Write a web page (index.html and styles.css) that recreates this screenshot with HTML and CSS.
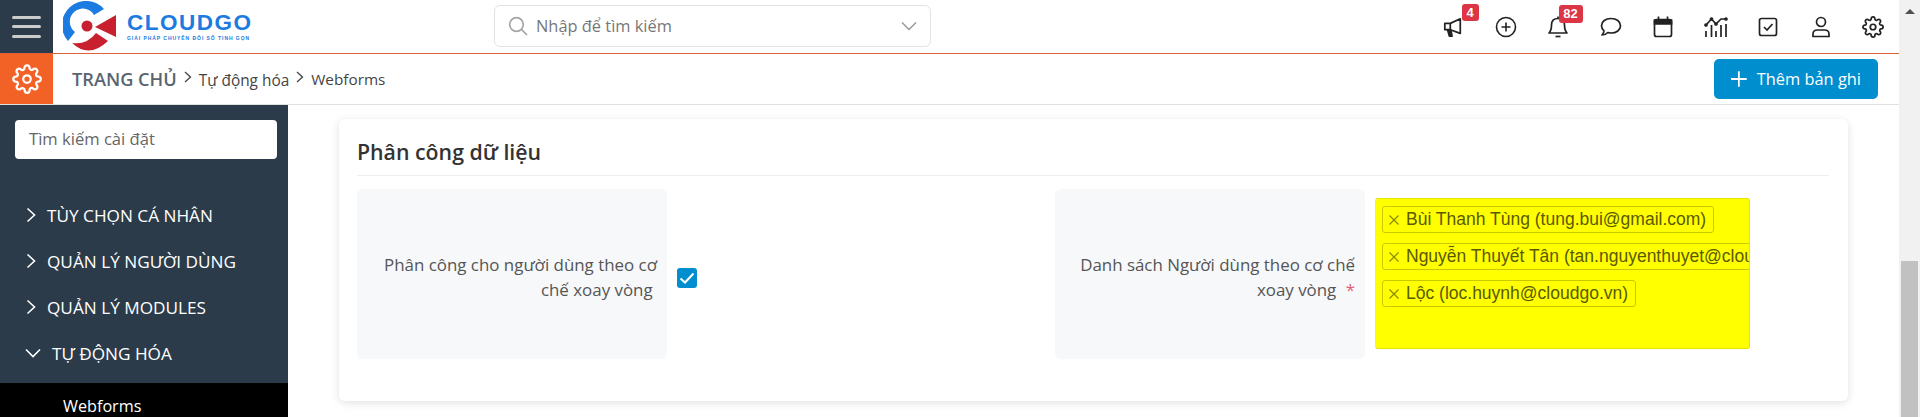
FILE: index.html
```html
<!DOCTYPE html>
<html lang="en">
  <head>
    <meta charset="UTF-8" />
    <title>Webforms</title>
    <link rel="stylesheet" href="styles.css">
  </head>
  <body>
    <div class="page">
      <div class="main">
        <header class="topbar">
          <button class="menu-btn">
            <span></span><span></span><span></span>
          </button>
          <div class="logo">
            <svg class="logo-mark" width="54" height="51" viewBox="0 0 54 51">
              <path d="M41 8 A24 24 0 1 0 5 40 L12 31 A13 13 0 1 1 31 14 Z" fill="#1c7be0" />
              <path d="M9 42 Q26 58 45 40 L33 32 Q24 44 9 42 Z" fill="#c9202f" />
              <path d="M32 26 L53 14 V36 Z" fill="#c9202f" />
              <circle cx="24" cy="25" r="5.5" fill="#c9202f" />
            </svg>
            <div class="logo-text">
              <div class="logo-name">CLOUDGO</div>
              <div class="logo-slogan">GIẢI PHÁP CHUYỂN ĐỔI SỐ TINH GỌN</div>
            </div>
          </div>
          <div class="search-wrap">
            <div class="search-box">
              <svg width="20" height="20" viewBox="0 0 20 20" fill="none" stroke="#a5a5a5" stroke-width="1.7">
                <circle cx="8.5" cy="8.5" r="6.8" />
                <path d="M13.5 13.5 L19 19" />
              </svg>
              <span class="search-text">Nhập để tìm kiếm</span>
              <svg class="search-caret" width="16" height="10" viewBox="0 0 16 10" fill="none" stroke="#9a9a9a" stroke-width="1.5">
                <path d="M1 1.5 L8 8.5 L15 1.5" />
              </svg>
            </div>
          </div>
          <nav class="top-icons">
            <a class="top-icon">
              <svg width="20" height="20" viewBox="0 0 22 22" fill="none" stroke="#222" stroke-width="1.9" stroke-linejoin="round">
                <path d="M2 7 H8 L19 2 V18 L8 14 H2 Z" />
                <path d="M5 14 L7 21 H10 L8.5 14" fill="#222" />
                <path d="M8 7 V14" />
              </svg>
              <span class="badge">4</span>
            </a>
            <a class="top-icon">
              <svg width="22" height="22" viewBox="0 0 22 22" fill="none" stroke="#222" stroke-width="1.6">
                <circle cx="11" cy="11" r="9.5" />
                <path d="M11 6.5 V15.5 M6.5 11 H15.5" />
              </svg>
            </a>
            <a class="top-icon">
              <svg width="22" height="24" viewBox="0 0 22 24" fill="none" stroke="#222" stroke-width="1.7" stroke-linejoin="round">
                <path d="M2 18 C4 16 4.5 14 4.5 10 C4.5 6 7 3.5 11 3.5 C15 3.5 17.5 6 17.5 10 C17.5 14 18 16 20 18 Z" />
                <path d="M8.5 21.5 H13.5" />
                <path d="M11 1.5 V3.5" />
              </svg>
              <span class="badge badge-wide">82</span>
            </a>
            <a class="top-icon">
              <svg width="22" height="22" viewBox="0 0 22 22" fill="none" stroke="#222" stroke-width="1.7" stroke-linejoin="round">
                <path d="M11 2.5 C16.5 2.5 20.5 5.5 20.5 9.8 C20.5 14 16.5 17 11 17 C9.8 17 8.8 16.8 7.8 16.5 C6.5 18 4.5 19 2 19 C3.2 17.8 4 16.5 4 14.8 C2.5 13.5 1.5 11.8 1.5 9.8 C1.5 5.5 5.5 2.5 11 2.5 Z" />
              </svg>
            </a>
            <a class="top-icon">
              <svg width="20" height="22" viewBox="0 0 20 22" fill="none" stroke="#222" stroke-width="1.7">
                <rect x="1.5" y="3.5" width="17" height="17" rx="2" />
                <path d="M1.5 4 H18.5 V8 H1.5 Z" fill="#222" />
                <path d="M5.5 0.5 V3 M14.5 0.5 V3" />
              </svg>
            </a>
            <a class="top-icon">
              <svg width="24" height="22" viewBox="0 0 24 22" fill="#222" stroke="#222" stroke-width="1.7">
                <path d="M2 9 L7.5 3 L12 8 L17 3 L22 3" fill="none" />
                <circle cx="2" cy="9" r="1" />
                <circle cx="7.5" cy="3" r="1" />
                <circle cx="12" cy="8" r="1" />
                <circle cx="22" cy="3" r="1" />
                <path d="M2 15 V21 M7.5 9 V21 M12 15 V21 M17 9 V21 M22 8 V21" fill="none" />
              </svg>
            </a>
            <a class="top-icon">
              <svg width="20" height="20" viewBox="0 0 20 20" fill="none" stroke="#222" stroke-width="1.7">
                <rect x="1.5" y="1.5" width="17" height="17" rx="2" />
                <path d="M6 10 L9 13 L14.5 7" />
              </svg>
            </a>
            <a class="top-icon">
              <svg width="20" height="22" viewBox="0 0 20 22" fill="none" stroke="#222" stroke-width="1.7">
                <circle cx="10" cy="6" r="4.5" />
                <path d="M2 20.5 V18 C2 15.5 4 14 6.5 14 H13.5 C16 14 18 15.5 18 18 V20.5 Z" />
              </svg>
            </a>
            <a class="top-icon">
              <svg width="22" height="22" viewBox="0 0 24 24" fill="none" stroke="#222" stroke-width="1.9">
                <circle cx="12" cy="12" r="3" />
                <path d="M19.4 15a1.65 1.65 0 0 0 .33 1.82l.06.06a2 2 0 0 1 0 2.83 2 2 0 0 1-2.83 0l-.06-.06a1.65 1.65 0 0 0-1.82-.33 1.65 1.65 0 0 0-1 1.51V21a2 2 0 0 1-2 2 2 2 0 0 1-2-2v-.09A1.65 1.65 0 0 0 9 19.4a1.65 1.65 0 0 0-1.82.33l-.06.06a2 2 0 0 1-2.83 0 2 2 0 0 1 0-2.83l.06-.06a1.65 1.65 0 0 0 .33-1.82 1.65 1.65 0 0 0-1.51-1H3a2 2 0 0 1-2-2 2 2 0 0 1 2-2h.09A1.65 1.65 0 0 0 4.6 9a1.65 1.65 0 0 0-.33-1.82l-.06-.06a2 2 0 0 1 0-2.83 2 2 0 0 1 2.83 0l.06.06a1.65 1.65 0 0 0 1.82.33H9a1.65 1.65 0 0 0 1-1.51V3a2 2 0 0 1 2-2 2 2 0 0 1 2 2v.09a1.65 1.65 0 0 0 1 1.51 1.65 1.65 0 0 0 1.82-.33l.06-.06a2 2 0 0 1 2.83 0 2 2 0 0 1 0 2.83l-.06.06a1.65 1.65 0 0 0-.33 1.82V9a1.65 1.65 0 0 0 1.51 1H21a2 2 0 0 1 2 2 2 2 0 0 1-2 2h-.09a1.65 1.65 0 0 0-1.51 1z" />
              </svg>
            </a>
          </nav>
        </header>

        <div class="crumbbar">
          <div class="settings-tile">
            <svg width="30" height="30" viewBox="0 0 24 24" fill="none" stroke="#fff" stroke-width="1.8">
              <circle cx="12" cy="12" r="3" />
              <path d="M19.4 15a1.65 1.65 0 0 0 .33 1.82l.06.06a2 2 0 0 1 0 2.83 2 2 0 0 1-2.83 0l-.06-.06a1.65 1.65 0 0 0-1.82-.33 1.65 1.65 0 0 0-1 1.51V21a2 2 0 0 1-2 2 2 2 0 0 1-2-2v-.09A1.65 1.65 0 0 0 9 19.4a1.65 1.65 0 0 0-1.82.33l-.06.06a2 2 0 0 1-2.83 0 2 2 0 0 1 0-2.83l.06-.06a1.65 1.65 0 0 0 .33-1.82 1.65 1.65 0 0 0-1.51-1H3a2 2 0 0 1-2-2 2 2 0 0 1 2-2h.09A1.65 1.65 0 0 0 4.6 9a1.65 1.65 0 0 0-.33-1.82l-.06-.06a2 2 0 0 1 0-2.83 2 2 0 0 1 2.83 0l.06.06a1.65 1.65 0 0 0 1.82.33H9a1.65 1.65 0 0 0 1-1.51V3a2 2 0 0 1 2-2 2 2 0 0 1 2 2v.09a1.65 1.65 0 0 0 1 1.51 1.65 1.65 0 0 0 1.82-.33l.06-.06a2 2 0 0 1 2.83 0 2 2 0 0 1 0 2.83l-.06.06a1.65 1.65 0 0 0-.33 1.82V9a1.65 1.65 0 0 0 1.51 1H21a2 2 0 0 1 2 2 2 2 0 0 1-2 2h-.09a1.65 1.65 0 0 0-1.51 1z" />
            </svg>
          </div>
          <div class="crumbs">
            <span class="crumb-home">TRANG CHỦ</span>
            <svg class="crumb-sep" width="8" height="12" viewBox="0 0 8 12" fill="none" stroke="#444" stroke-width="1.3"><path d="M1 1 L6.5 6 L1 11" /></svg>
            <span class="crumb-link">Tự động hóa</span>
            <svg class="crumb-sep" width="8" height="12" viewBox="0 0 8 12" fill="none" stroke="#444" stroke-width="1.3"><path d="M1 1 L6.5 6 L1 11" /></svg>
            <span class="crumb-current">Webforms</span>
          </div>
          <button class="add-btn">
            <svg width="16" height="16" viewBox="0 0 16 16" fill="none" stroke="#fff" stroke-width="1.8"><path d="M8 0 V16 M0 8 H16" /></svg>
            Thêm bản ghi
          </button>
        </div>

        <div class="body-row">
          <aside class="sidebar">
            <div class="side-search">
              <div class="side-input">Tìm kiếm cài đặt</div>
            </div>
            <ul class="side-menu">
              <li class="side-item">
                <svg width="10" height="16" viewBox="0 0 10 16" fill="none" stroke="#fff" stroke-width="1.6"><path d="M1.5 1.5 L8.5 8 L1.5 14.5" /></svg>
                TÙY CHỌN CÁ NHÂN
              </li>
              <li class="side-item">
                <svg width="10" height="16" viewBox="0 0 10 16" fill="none" stroke="#fff" stroke-width="1.6"><path d="M1.5 1.5 L8.5 8 L1.5 14.5" /></svg>
                QUẢN LÝ NGƯỜI DÙNG
              </li>
              <li class="side-item">
                <svg width="10" height="16" viewBox="0 0 10 16" fill="none" stroke="#fff" stroke-width="1.6"><path d="M1.5 1.5 L8.5 8 L1.5 14.5" /></svg>
                QUẢN LÝ MODULES
              </li>
              <li class="side-item side-open">
                <svg width="16" height="10" viewBox="0 0 16 10" fill="none" stroke="#fff" stroke-width="1.6"><path d="M1 1.5 L8 8.5 L15 1.5" /></svg>
                TỰ ĐỘNG HÓA
              </li>
              <li class="side-sub">Webforms</li>
            </ul>
          </aside>

          <main class="content">
            <section class="card">
              <h2 class="card-title">Phân công dữ liệu</h2>
              <div class="form-grid">
                <div class="field">
                  <div class="field-label">
                    <span>Phân công cho người dùng theo cơ<br />chế xoay vòng&nbsp;</span>
                  </div>
                  <span class="checkbox">
                    <svg width="20" height="20" viewBox="0 0 20 20" fill="none" stroke="#fff" stroke-width="2"><path d="M3.5 10.5 L8 14.5 L16.5 5.5" /></svg>
                  </span>
                </div>
                <div class="field">
                  <div class="field-label">
                    <span>Danh sách Người dùng theo cơ chế<br />xoay vòng <span class="required">*</span></span>
                  </div>
                  <div class="tag-box">
                    <div class="tag">
                      <svg width="10" height="10" viewBox="0 0 10 10" fill="none" stroke="#8a8a00" stroke-width="1.2"><path d="M0.5 0.5 L9.5 9.5 M9.5 0.5 L0.5 9.5" /></svg>
                      Bùi Thanh Tùng (tung.bui@gmail.com)
                    </div>
                    <div class="tag">
                      <svg width="10" height="10" viewBox="0 0 10 10" fill="none" stroke="#8a8a00" stroke-width="1.2"><path d="M0.5 0.5 L9.5 9.5 M9.5 0.5 L0.5 9.5" /></svg>
                      Nguyễn Thuyết Tân (tan.nguyenthuyet@cloudgo.vn)
                    </div>
                    <div class="tag">
                      <svg width="10" height="10" viewBox="0 0 10 10" fill="none" stroke="#8a8a00" stroke-width="1.2"><path d="M0.5 0.5 L9.5 9.5 M9.5 0.5 L0.5 9.5" /></svg>
                      Lộc (loc.huynh@cloudgo.vn)
                    </div>
                  </div>
                </div>
              </div>
            </section>
          </main>
        </div>
      </div>

      <div class="scrollbar">
        <div class="scroll-arrow"></div>
        <div class="scroll-thumb"></div>
      </div>
    </div>
  </body>
</html>
```

FILE: styles.css
```css
* {
    box-sizing: border-box;
}

html, body {
    margin: 0;
    height: 417px;
    overflow: hidden;
}

body {
    font-family: "Open Sans", "Noto Sans", sans-serif;
    background-color: #fff;
    color: #333;
}

.page {
    display: flex;
    height: 417px;
}

.main {
    flex: 1;
    min-width: 0;
    display: flex;
    flex-direction: column;
}

/* Top bar */
.topbar {
    display: flex;
    align-items: center;
    height: 54px;
    border-bottom: 1px solid #e0603a;
    flex-shrink: 0;
}

.menu-btn {
    width: 53px;
    height: 53px;
    background-color: #2c3b4a;
    border: none;
    padding: 0 12px;
    display: flex;
    flex-direction: column;
    justify-content: center;
    gap: 6.5px;
}

.menu-btn span {
    display: block;
    height: 3px;
    border-radius: 2px;
    background-color: #ccc;
}

.logo {
    display: flex;
    align-items: center;
    margin-left: 10px;
    width: 431px;
}

.logo-text {
    margin-left: 10px;
}

.logo-name {
    font-family: "Liberation Sans", sans-serif;
    font-weight: 700;
    font-size: 22.5px;
    line-height: 24px;
    letter-spacing: 1.5px;
    color: #1c7be0;
}

.logo-slogan {
    font-family: "Liberation Sans", sans-serif;
    font-weight: 700;
    font-size: 5px;
    line-height: 7px;
    letter-spacing: 0.95px;
    color: #1c7be0;
}

.search-wrap {
    flex: 1;
}

.search-box {
    display: flex;
    align-items: center;
    width: 437px;
    height: 42px;
    margin-bottom: 2px;
    padding: 0 13px;
    border: 1px solid #e3e3e3;
    border-radius: 6px;
}

.search-text {
    margin-left: 8px;
    font-size: 16.4px;
    color: #777;
}

.search-caret {
    margin-left: auto;
}

.top-icons {
    display: flex;
    align-items: center;
    gap: 27.5px;
    padding-right: 13.5px;
}

.top-icon {
    position: relative;
    display: flex;
    align-items: center;
    justify-content: center;
    width: 25px;
}

.badge {
    position: absolute;
    top: -13px;
    left: 21px;
    min-width: 17px;
    height: 17px;
    border-radius: 3px;
    background-color: #dc3545;
    color: #fff;
    font-family: "Liberation Sans", sans-serif;
    font-weight: 700;
    font-size: 13px;
    line-height: 17px;
    text-align: center;
}

.badge-wide {
    width: 24px;
    height: 18px;
    top: -10px;
    left: 13px;
}

/* Breadcrumb row */
.crumbbar {
    display: flex;
    align-items: center;
    height: 51px;
    flex-shrink: 0;
    border-bottom: 1px solid #e0e0e0;
    padding-right: 21px;
}

.settings-tile {
    width: 53px;
    height: 50px;
    background-color: #f26226;
    display: flex;
    align-items: center;
    justify-content: center;
}

.crumbs {
    flex: 1;
    display: flex;
    align-items: center;
    margin-left: 19px;
    color: #444;
}

.crumb-home {
    font-size: 18.2px;
    font-weight: 600;
    color: #5a6570;
    margin-top: -1px;
}

.crumb-sep {
    margin: -4px 7px 0 7px;
}

.crumb-link {
    font-size: 15.4px;
    margin-top: 3px;
}

.crumb-current {
    font-size: 15.3px;
}

.add-btn {
    display: flex;
    align-items: center;
    gap: 10px;
    width: 164px;
    height: 40px;
    margin-bottom: 1px;
    padding: 0 17px;
    border: none;
    border-radius: 5px;
    background-color: #008ecf;
    color: #fff;
    font-family: inherit;
    font-size: 16.4px;
    white-space: nowrap;
}

/* Sidebar */
.body-row {
    flex: 1;
    display: flex;
    min-height: 0;
}

.sidebar {
    width: 288px;
    background-color: #2c3b4a;
    flex-shrink: 0;
    overflow: hidden;
}

.side-search {
    padding: 15px 11px 0 15px;
}

.side-input {
    height: 39px;
    padding: 0 14px;
    border-radius: 4px;
    background-color: #fff;
    color: #666;
    font-size: 16.6px;
    line-height: 38px;
}

.side-menu {
    list-style: none;
    margin: 33px 0 0;
    padding: 0;
}

.side-item {
    display: flex;
    align-items: center;
    gap: 11px;
    height: 46px;
    padding-left: 26px;
    color: #fff;
    font-size: 17.2px;
}

.side-open {
    padding-left: 25px;
}

.side-sub {
    height: 80px;
    margin-top: 7px;
    padding: 12px 0 0 63px;
    background-color: #000;
    color: #fff;
    font-size: 16.2px;
    line-height: 23px;
}

/* Content */
.content {
    flex: 1;
    min-width: 0;
    padding: 14px 51px 0 51px;
    background-color: #fff;
}

.card {
    height: 282px;
    padding: 18px 19px 0 18px;
    border-radius: 6px;
    background-color: #fff;
    box-shadow: 0 2px 8px rgba(0, 0, 0, 0.12);
}

.card-title {
    margin: 0;
    height: 39px;
    font-size: 21.3px;
    font-weight: 600;
    line-height: 30px;
    color: #333;
    border-bottom: 1px solid #eee;
}

.form-grid {
    display: grid;
    grid-template-columns: 698px 1fr;
    margin-top: 13px;
}

.field {
    display: flex;
    align-items: center;
    gap: 10px;
}

.field-label {
    width: 310px;
    height: 170px;
    flex-shrink: 0;
    display: flex;
    align-items: center;
    justify-content: flex-end;
    padding: 6px 10px 0;
    border-radius: 6px;
    background-color: #f7f8fa;
    color: #555;
    font-size: 16.9px;
    line-height: 25px;
    text-align: right;
}

.required {
    color: #e0607a;
    margin-left: 5px;
}

.checkbox {
    display: flex;
    width: 20px;
    height: 20px;
    margin-top: 8px;
    border-radius: 3px;
    background-color: #008ecf;
}

.tag-box {
    width: 375px;
    height: 151px;
    margin-bottom: 1px;
    padding: 7px 6px;
    overflow: hidden;
    background-color: #ff0;
    border: 1px solid #e5e500;
    border-left-color: #ddd;
    border-radius: 3px;
}

.tag {
    display: flex;
    align-items: center;
    gap: 7px;
    width: fit-content;
    height: 27px;
    margin-bottom: 10px;
    padding: 0 7px 0 6px;
    border: 1px solid #c9c900;
    border-radius: 3px;
    color: #5a5a00;
    font-family: "Liberation Sans", sans-serif;
    font-size: 17.5px;
    white-space: nowrap;
}

/* Fake browser scrollbar */
.scrollbar {
    position: relative;
    width: 21px;
    flex-shrink: 0;
    background-color: #f1f1f1;
}

.scroll-arrow {
    width: 0;
    margin: 9px auto 0;
    border-left: 5px solid transparent;
    border-right: 5px solid transparent;
    border-bottom: 5px solid #505050;
}

.scroll-thumb {
    position: absolute;
    left: 2px;
    right: 2px;
    top: 261px;
    bottom: 0;
    background-color: #c1c1c1;
}
```
